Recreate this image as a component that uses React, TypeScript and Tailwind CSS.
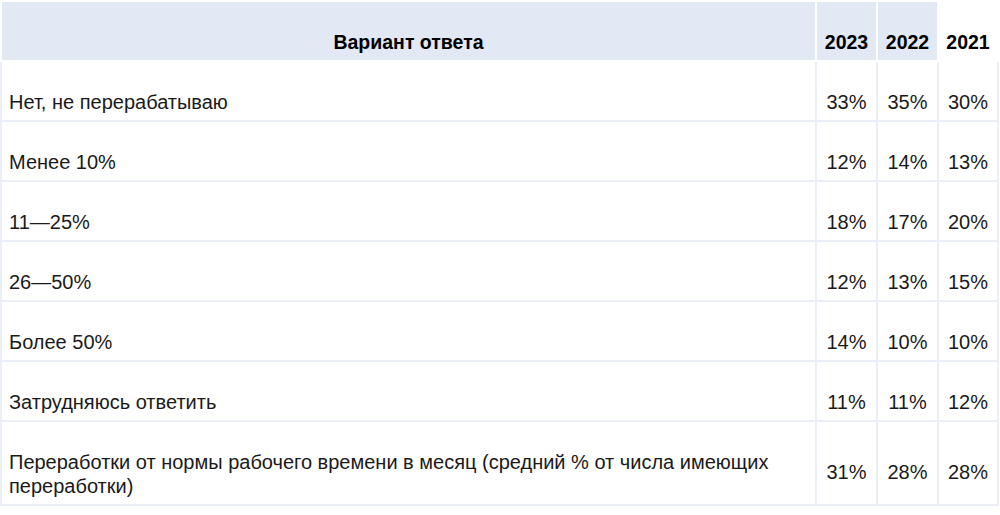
import React from "react";

const rows: [string, string, string, string][] = [
  ["Нет, не перерабатываю", "33%", "35%", "30%"],
  ["Менее 10%", "12%", "14%", "13%"],
  ["11—25%", "18%", "17%", "20%"],
  ["26—50%", "12%", "13%", "15%"],
  ["Более 50%", "14%", "10%", "10%"],
  ["Затрудняюсь ответить", "11%", "11%", "12%"],
  [
    "Переработки от нормы рабочего времени в месяц (средний % от числа имеющих переработки)",
    "31%",
    "28%",
    "28%",
  ],
];

export default function App() {
  return (
    <div
      className="w-[1000px] h-[515px] bg-white overflow-hidden"
      style={{ fontFamily: '"Liberation Sans", Arial, sans-serif' }}
    >
      <table className="border-collapse table-fixed w-[997px] text-[20px] leading-[24px] text-[#1a1a1a]">
        <colgroup>
          <col className="w-[815px]" />
          <col className="w-[61px]" />
          <col className="w-[61px]" />
          <col className="w-[60px]" />
        </colgroup>
        <thead>
          <tr className="h-[60px]">
            <th className="border-2 border-white bg-[#e2e8f4] align-bottom pb-[6px] text-[19.5px] font-bold text-black text-center">
              Вариант ответа
            </th>
            <th className="border-2 border-white bg-[#e2e8f4] align-bottom pb-[6px] text-[19.5px] font-bold text-black text-center">
              2023
            </th>
            <th className="border-2 border-white bg-[#e2e8f4] align-bottom pb-[6px] text-[19.5px] font-bold text-black text-center">
              2022
            </th>
            <th className="border-2 border-white bg-white align-bottom pb-[6px] text-[19.5px] font-bold text-black text-center">
              2021
            </th>
          </tr>
        </thead>
        <tbody>
          {rows.map((r, i) => {
            const last = i === rows.length - 1;
            const num = last
              ? "border-2 border-[#e9eef7] align-middle pt-[23px] pb-[6px] text-center"
              : "border-2 border-[#e9eef7] align-bottom pb-[6px] text-center";
            return (
              <tr key={i} className={last ? "h-[84px]" : "h-[60px]"}>
                <td className="border-2 border-[#e9eef7] align-bottom pb-[6px] pl-[7px] pr-[8px] text-left">
                  {r[0]}
                </td>
                <td className={num}>{r[1]}</td>
                <td className={num}>{r[2]}</td>
                <td className={num}>{r[3]}</td>
              </tr>
            );
          })}
        </tbody>
      </table>
    </div>
  );
}
